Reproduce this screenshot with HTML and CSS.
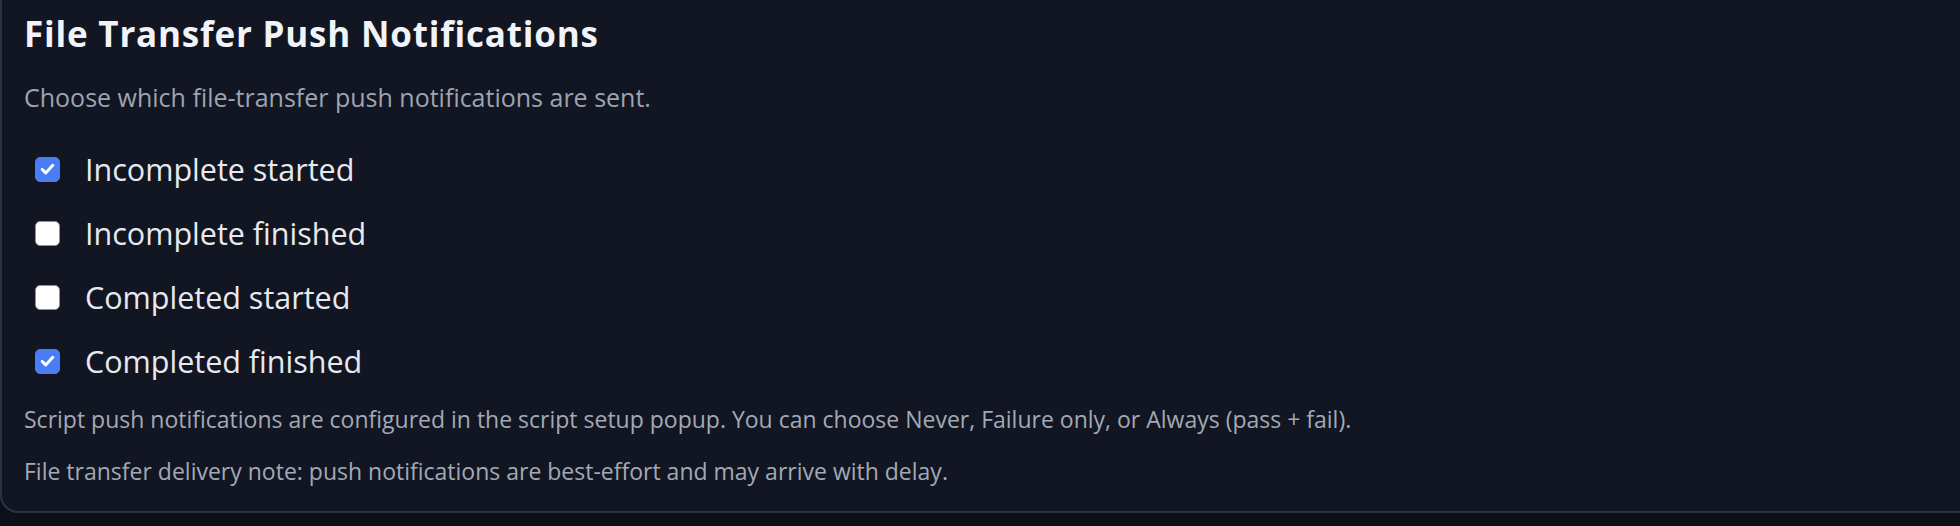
FILE: index.html
```html
<!DOCTYPE html>
<html lang="en">
<head>
<meta charset="utf-8">
<title>File Transfer Push Notifications</title>
<link rel="stylesheet" href="styles.css">
</head>
<body>
<section class="card">
  <h2 class="title">File Transfer Push Notifications</h2>
  <p class="desc">Choose which file-transfer push notifications are sent.</p>
  <ul class="options">
    <li class="option">
      <span class="box checked"><svg viewBox="0 0 24 24" width="24" height="24"><path d="M6.5 12.5l3.6 3.6 7.4-8" fill="none" stroke="#fff" stroke-width="3.2" stroke-linecap="round" stroke-linejoin="round"/></svg></span>
      <span class="label">Incomplete started</span>
    </li>
    <li class="option">
      <span class="box"></span>
      <span class="label">Incomplete finished</span>
    </li>
    <li class="option">
      <span class="box"></span>
      <span class="label">Completed started</span>
    </li>
    <li class="option">
      <span class="box checked"><svg viewBox="0 0 24 24" width="24" height="24"><path d="M6.5 12.5l3.6 3.6 7.4-8" fill="none" stroke="#fff" stroke-width="3.2" stroke-linecap="round" stroke-linejoin="round"/></svg></span>
      <span class="label">Completed finished</span>
    </li>
  </ul>
  <p class="note">Script push notifications are configured in the script setup popup. You can choose Never, Failure only, or Always (pass + fail).</p>
  <p class="note">File transfer delivery note: push notifications are best-effort and may arrive with delay.</p>
</section>
</body>
</html>
```
FILE: styles.css
```css
html, body {
  margin: 0;
  padding: 0;
  background: #0d1017;
  height: 100%;
  overflow: hidden;
}
body {
  font-family: "Open Sans", "Liberation Sans", sans-serif;
  -webkit-font-smoothing: antialiased;
}
.card {
  background: #121622;
  border: 2px solid #2e3342;
  border-top: none;
  border-right: none;
  border-radius: 0 0 0 18px;
  padding: 14px 0 26px 22px;
  display: flex;
  flex-direction: column;
}
.title {
  margin: 0;
  font-family: "Open Sans", "Noto Sans", sans-serif;
  font-weight: 700;
  font-size: 35px;
  line-height: 40px;
  color: #f1f3f8;
  letter-spacing: 0.8px;
}
.desc {
  margin: 28px 0 0;
  font-size: 25px;
  line-height: 30px;
  color: #9ea4b0;
}
.options {
  list-style: none;
  margin: 37px 0 0;
  padding: 0;
  display: flex;
  flex-direction: column;
  gap: 24px;
}
.option {
  display: flex;
  align-items: center;
  height: 40px;
}
.box {
  width: 25px;
  height: 25px;
  box-sizing: border-box;
  border-radius: 5px;
  background: #ffffff;
  border: 1px solid #8c8f97;
  margin-left: 11px;
  display: flex;
  align-items: center;
  justify-content: center;
}
.box.checked {
  background: #4a7df3;
  border-color: #4a7df3;
}
.box svg { display: block; }
.label {
  margin-left: 25px;
  font-size: 30.5px;
  color: #e7e9ef;
}
.note {
  margin: 24px 0 0;
  font-size: 23px;
  line-height: 28px;
  color: #a3a9b5;
}
```
